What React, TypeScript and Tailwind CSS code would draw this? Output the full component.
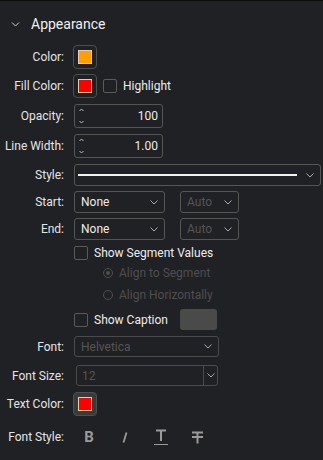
import React from "react";

const font = { fontFamily: "Roboto, 'Noto Sans', sans-serif" };

function Chevron({ className = "" }: { className?: string }) {
  return (
    <svg width="8" height="5" viewBox="0 0 8 5" className={className}>
      <path d="M0.5 0.5 L4 4 L7.5 0.5" fill="none" stroke="currentColor" strokeWidth="1" />
    </svg>
  );
}

function Label({ children }: { children: React.ReactNode }) {
  return <div className="w-[65px] shrink-0 text-right text-[12px] text-[#e4e4e4] pr-[1px]">{children}</div>;
}

function Swatch({ color, pressed = false }: { color: string; pressed?: boolean }) {
  return (
    <div
      className={`w-[24px] h-[24px] rounded-[4px] border border-[#4f4f4f] flex items-center justify-center ${
        pressed ? "bg-[#3a3a3a]" : ""
      }`}
    >
      <div className="w-[14px] h-[14px] border border-[#f2c8a0]" style={{ backgroundColor: color }} />
    </div>
  );
}

function Checkbox() {
  return <div className="w-[14px] h-[14px] rounded-[2px] border border-[#5a5a5a]" />;
}

function Spin({ value }: { value: string }) {
  return (
    <div className="w-[89px] h-[24px] rounded-[3px] border border-[#555] flex items-center pl-[4px] pr-[4px]">
      <div className="flex flex-col justify-between h-[16px] text-[#bdbdbd]">
        <svg width="5" height="4" viewBox="0 0 5 4">
          <path d="M0.5 3 L2.5 1 L4.5 3" fill="none" stroke="currentColor" strokeWidth="1" />
        </svg>
        <svg width="5" height="4" viewBox="0 0 5 4">
          <path d="M0.5 1 L2.5 3 L4.5 1" fill="none" stroke="currentColor" strokeWidth="1" />
        </svg>
      </div>
      <div className="flex-1 text-right text-[12px] text-[#ececec]">{value}</div>
    </div>
  );
}

function Select({ text, w, disabled = false }: { text: string; w: string; disabled?: boolean }) {
  return (
    <div className={`${w} h-[22px] rounded-[3px] border border-[#555] flex items-center pl-[6px] pr-[6px]`}>
      <div className={`flex-1 text-[12px] ${disabled ? "text-[#555]" : "text-[#ececec]"}`}>{text}</div>
      <Chevron className="text-[#aaa]" />
    </div>
  );
}

function Radio({ checked }: { checked: boolean }) {
  return (
    <div className="w-[10px] h-[10px] rounded-full border border-[#4e4e4e] flex items-center justify-center">
      {checked && <div className="w-[4px] h-[4px] rounded-full bg-[#4e4e4e]" />}
    </div>
  );
}

export default function App() {
  return (
    <div
      className="w-[323px] h-[460px] bg-[#202124] border-t border-[#0c0c0c] flex flex-col pt-[11px] overflow-hidden"
      style={font}
    >
      {/* header */}
      <div className="h-[24px] flex items-center">
        <Chevron className="text-[#d0d0d0] ml-[11px] w-[9px]" />
        <div className="ml-[11px] text-[14px] text-[#f0f0f0]">Appearance</div>
      </div>

      <div className="mt-[9px] h-[24px] flex items-center gap-[8px]">
        <Label>Color:</Label>
        <Swatch color="#ff9f00" />
      </div>

      <div className="mt-[5px] h-[24px] flex items-center gap-[8px]">
        <Label>Fill Color:</Label>
        <Swatch color="#ff0000" />
        <div className="ml-[-2px] flex items-center gap-[6px]">
          <Checkbox />
          <span className="text-[12px] text-[#ececec]">Highlight</span>
        </div>
      </div>

      <div className="mt-[6px] h-[24px] flex items-center gap-[9px]">
        <Label>Opacity:</Label>
        <Spin value="100" />
      </div>

      <div className="mt-[6px] h-[24px] flex items-center gap-[9px]">
        <Label>Line Width:</Label>
        <Spin value="1.00" />
      </div>

      <div className="mt-[6px] h-[22px] flex items-center gap-[9px]">
        <Label>Style:</Label>
        <div className="w-[247px] h-[22px] rounded-[3px] border border-[#555] flex items-center pl-[3px] pr-[6px]">
          <div className="flex-1 h-[2px] bg-[#f0f0f0] mr-[9px]" />
          <Chevron className="text-[#aaa]" />
        </div>
      </div>

      <div className="mt-[5px] h-[22px] flex items-center gap-[9px]">
        <Label>Start:</Label>
        <Select text="None" w="w-[91px]" />
        <div className="ml-[6px]">
          <Select text="Auto" w="w-[59px]" disabled />
        </div>
      </div>

      <div className="mt-[5px] h-[22px] flex items-center gap-[9px]">
        <Label>End:</Label>
        <Select text="None" w="w-[91px]" />
        <div className="ml-[6px]">
          <Select text="Auto" w="w-[59px]" disabled />
        </div>
      </div>

      <div className="mt-[5px] h-[15px] flex items-center pl-[74px] gap-[6px]">
        <Checkbox />
        <span className="text-[12px] text-[#ececec]">Show Segment Values</span>
      </div>

      <div className="mt-[5px] h-[16px] flex items-center pl-[103px] gap-[6px]">
        <Radio checked />
        <span className="text-[12px] text-[#4e4e4e]">Align to Segment</span>
      </div>

      <div className="mt-[6px] h-[16px] flex items-center pl-[103px] gap-[6px]">
        <Radio checked={false} />
        <span className="text-[12px] text-[#4e4e4e]">Align Horizontally</span>
      </div>

      <div className="mt-[6px] h-[21px] flex items-center pl-[74px]">
        <div className="flex items-center gap-[6px] w-[106px]">
          <Checkbox />
          <span className="text-[12px] text-[#ececec]">Show Caption</span>
        </div>
        <div className="w-[37px] h-[21px] rounded-[3px] bg-[#4a4a4a]" />
      </div>

      <div className="mt-[6px] h-[21px] flex items-center gap-[9px]">
        <Label>Font:</Label>
        <div className="w-[145px] h-[21px] rounded-[3px] border border-[#4a4a4a] flex items-center pl-[6px] pr-[6px]">
          <div className="flex-1 text-[12px] text-[#555]">Helvetica</div>
          <Chevron className="text-[#aaa]" />
        </div>
      </div>

      <div className="mt-[8px] h-[21px] flex items-center gap-[11px]">
        <Label>Font Size:</Label>
        <div className="w-[142px] h-[21px] rounded-[3px] border border-[#4a4a4a] flex items-center">
          <div className="flex-1 pl-[5px] text-[12px] text-[#555] h-full flex items-center border-r border-[#4a4a4a]">12</div>
          <div className="w-[13px] flex items-center justify-center">
            <Chevron className="text-[#aaa]" />
          </div>
        </div>
      </div>

      <div className="mt-[6px] h-[24px] flex items-center gap-[8px]">
        <Label>Text Color:</Label>
        <Swatch color="#ff0000" pressed />
      </div>

      <div className="mt-[9px] h-[24px] flex items-center">
        <Label>Font Style:</Label>
        <div className="flex items-center text-[#9a9a9a]">
          <div className="w-[36px] ml-[6px] flex justify-center text-[15px] font-bold leading-none">B</div>
          <div className="w-[36px] flex justify-center">
            <svg width="6" height="11" viewBox="0 0 6 11">
              <path d="M4.5 0.5 L1.5 10.5" stroke="currentColor" strokeWidth="1.8" />
            </svg>
          </div>
          <div className="w-[36px] flex justify-center">
            <svg width="14" height="16" viewBox="0 0 14 16">
              <path d="M2 1.5 H12 M7 1.5 V12" stroke="currentColor" strokeWidth="2" fill="none" />
              <path d="M0 15.5 H14" stroke="currentColor" strokeWidth="1" />
            </svg>
          </div>
          <div className="w-[36px] flex justify-center">
            <svg width="13" height="13" viewBox="0 0 13 13">
              <path d="M1 1.5 H12 M6.5 1.5 V12.5 M1 6 H12" stroke="currentColor" strokeWidth="2" fill="none" />
            </svg>
          </div>
        </div>
      </div>
    </div>
  );
}
